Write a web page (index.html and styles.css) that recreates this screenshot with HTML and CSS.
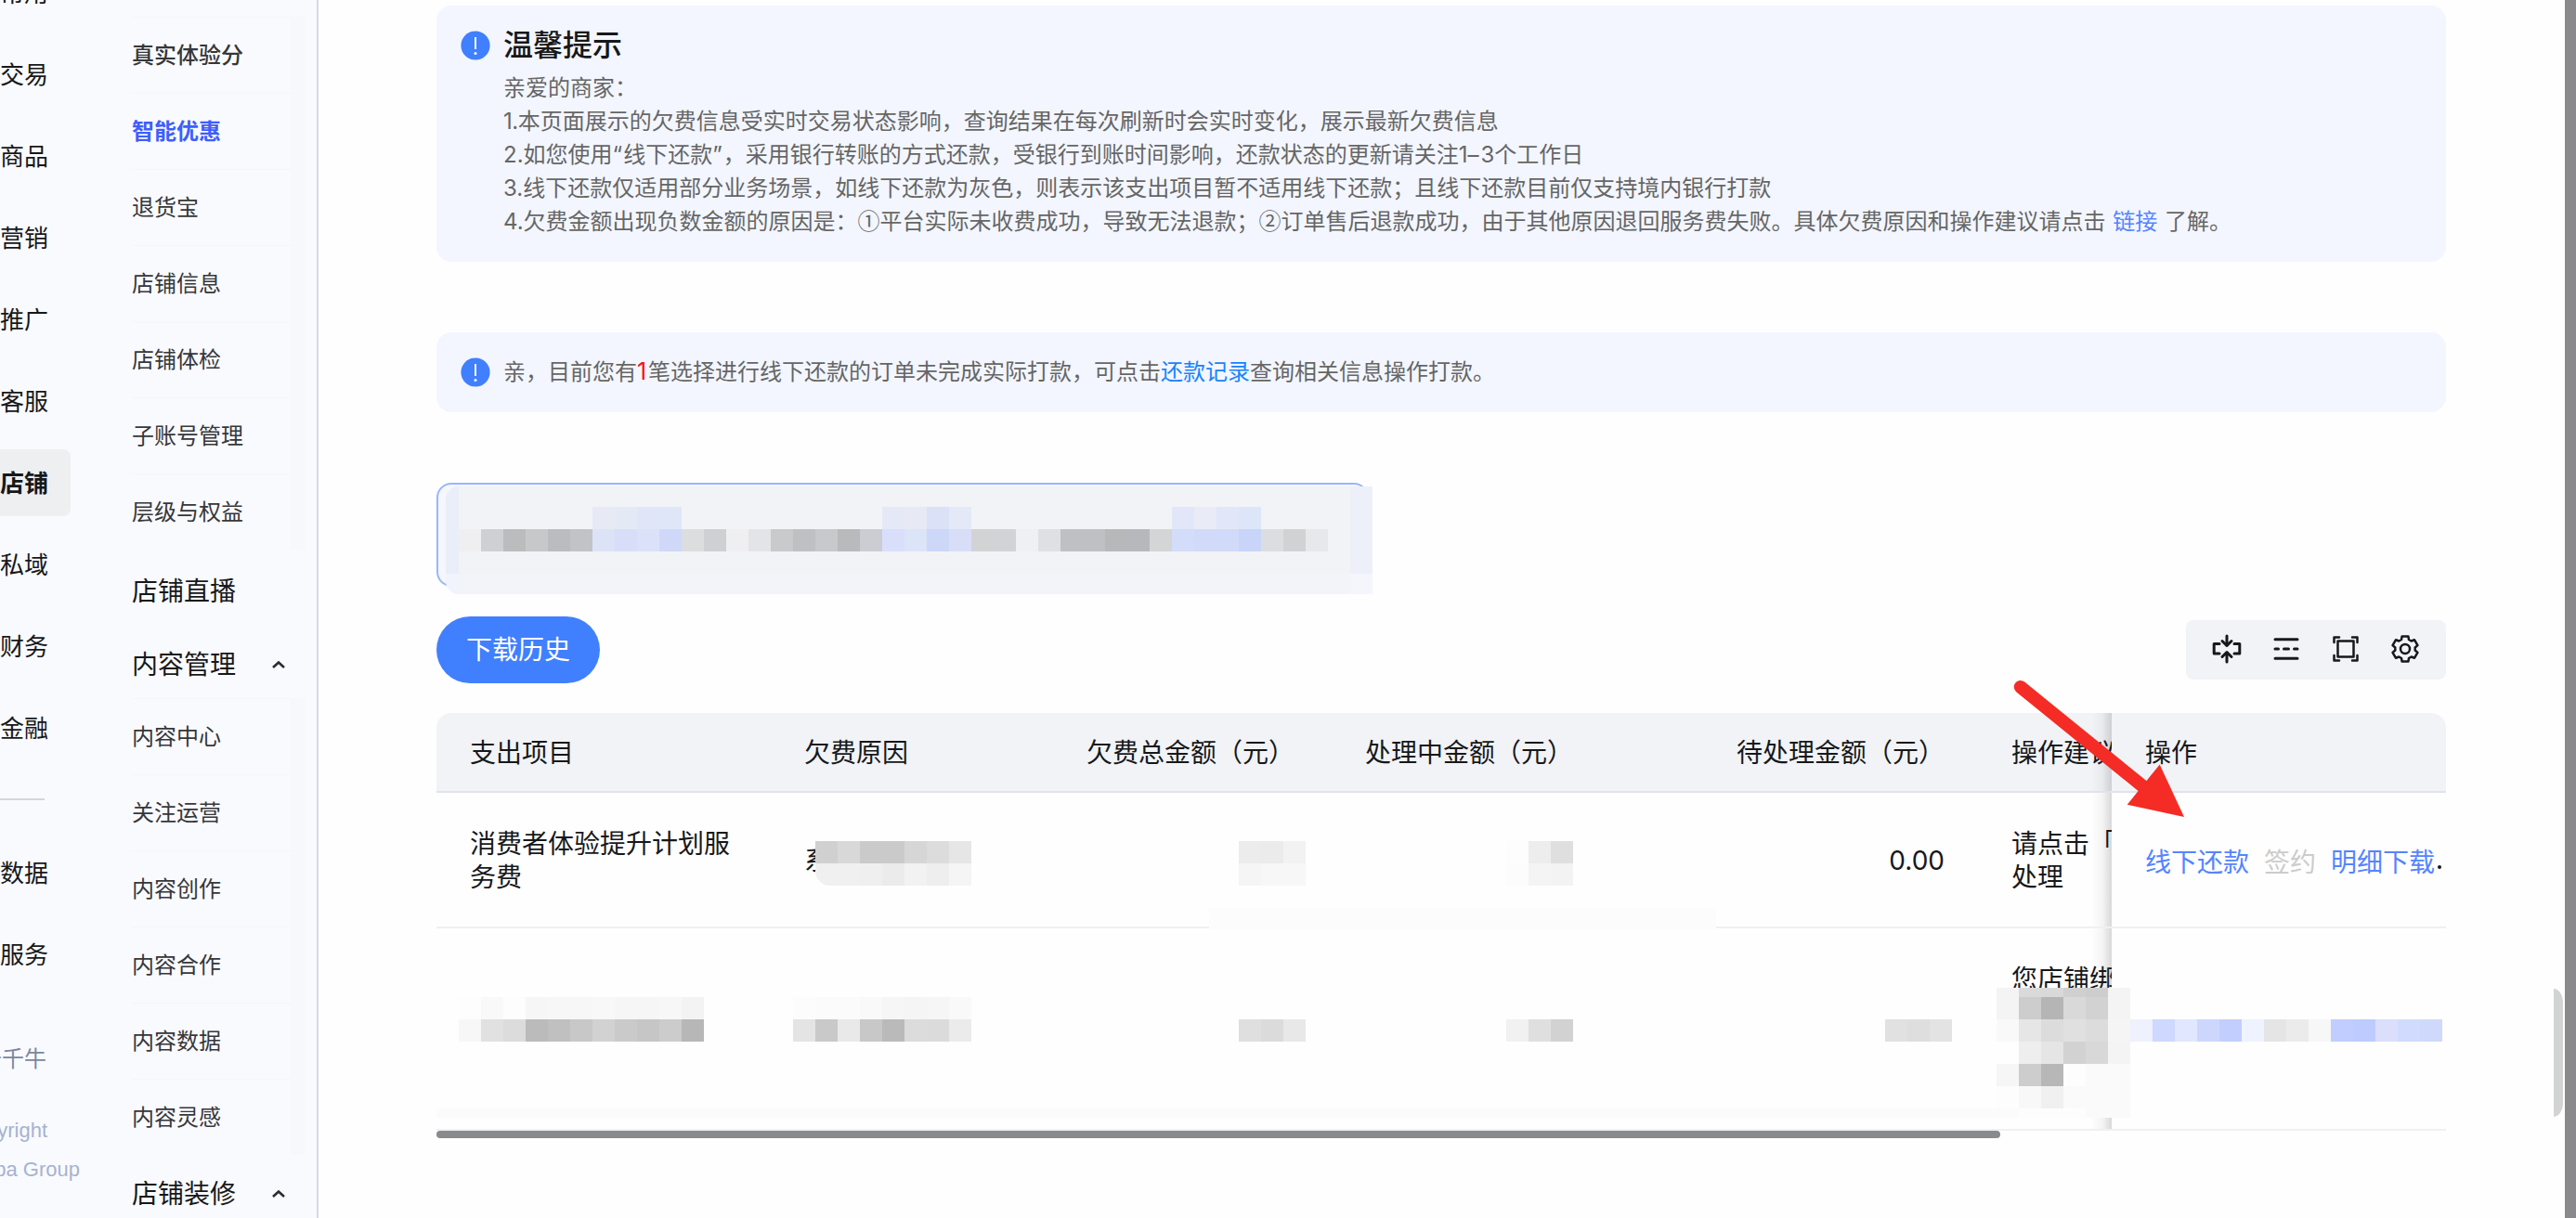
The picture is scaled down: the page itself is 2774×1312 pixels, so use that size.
FILE: index.html
```html
<!DOCTYPE html>
<html lang="zh-CN">
<head>
<meta charset="utf-8">
<title>欠费管理</title>
<link rel="stylesheet" href="styles.css">
</head>
<body>
<div class="app">
  <nav class="rail">
    <div class="rail-item">常用</div>
    <div class="rail-item">交易</div>
    <div class="rail-item">商品</div>
    <div class="rail-item">营销</div>
    <div class="rail-item">推广</div>
    <div class="rail-item">客服</div>
    <div class="rail-item active">店铺</div>
    <div class="rail-item">私域</div>
    <div class="rail-item">财务</div>
    <div class="rail-item">金融</div>
    <div class="rail-rule"></div>
    <div class="rail-item">数据</div>
    <div class="rail-item">服务</div>
    <div class="rail-foot">
      <div class="brand">关于千牛</div>
      <div class="legal">Copyright</div>
      <div class="legal group">Alibaba Group</div>
    </div>
  </nav>
  <aside class="menu">
    <ul class="sub">
      <li class="strong">真实体验分</li>
      <li class="current">智能优惠</li>
      <li>退货宝</li>
      <li>店铺信息</li>
      <li>店铺体检</li>
      <li>子账号管理</li>
      <li>层级与权益</li>
    </ul>
    <div class="head first">店铺直播</div>
    <div class="head">内容管理<svg class="chev" viewBox="0 0 16 10"><path d="M2 8 8 2.5 14 8"/></svg></div>
    <ul class="sub">
      <li>内容中心</li>
      <li>关注运营</li>
      <li>内容创作</li>
      <li>内容合作</li>
      <li>内容数据</li>
      <li>内容灵感</li>
    </ul>
    <div class="head">店铺装修<svg class="chev" viewBox="0 0 16 10"><path d="M2 8 8 2.5 14 8"/></svg></div>
  </aside>
  <main class="main">
    <section class="notice tips">
      <svg class="info" viewBox="0 0 32 32"><circle cx="16" cy="16" r="15.6"/><path d="M16 7v13"/><circle class="dot" cx="16" cy="24.6" r="1.5"/></svg>
      <div>
        <h1>温馨提示</h1>
        <p>亲爱的商家：</p>
        <p><span class="one">1.</span>本页面展示的欠费信息受实时交易状态影响，查询结果在每次刷新时会实时变化，展示最新欠费信息</p>
        <p>2.如您使用<span class="quote">“</span>线下还款<span class="quote">”</span>，采用银行转账的方式还款，受银行到账时间影响，还款状态的更新请关注1<span class="dash">–</span>3个工作日</p>
        <p>3.线下还款仅适用部分业务场景，如线下还款为灰色，则表示该支出项目暂不适用线下还款；且线下还款目前仅支持境内银行打款</p>
        <p>4.欠费金额出现负数金额的原因是：<span class="cjk">①</span>平台实际未收费成功，导致无法退款；<span class="cjk">②</span>订单售后退款成功，由于其他原因退回服务费失败。具体欠费原因和操作建议请点击 <a class="gap">链接</a> 了解。</p>
      </div>
    </section>
    <section class="notice pending">
      <svg class="info" viewBox="0 0 32 32"><circle cx="16" cy="16" r="15.6"/><path d="M16 7v13"/><circle class="dot" cx="16" cy="24.6" r="1.5"/></svg>
      <p>亲，目前您有<b>1</b>笔选择进行线下还款的订单未完成实际打款，可点击<a class="bright">还款记录</a>查询相关信息操作打款。</p>
    </section>
    <section class="tabs">
      <div class="tabs-frame"></div>
      <svg class="tabs-mask" width="998" height="116" shape-rendering="crispEdges">
        <rect width="14" height="94" fill="#eaeef8"/><rect x="14" width="960" height="94" fill="#f1f3f7"/><rect x="974" width="24" height="94" fill="#edf0f9"/>
        <rect y="94" width="14" height="22" fill="#f1f4fc"/><rect x="14" y="94" width="960" height="22" fill="#f2f4f9"/><rect x="974" y="94" width="24" height="22" fill="#f4f6fc"/>
        <g id="tabCells" transform="translate(14 22)"></g>
      </svg>
    </section>
    <div class="bar">
      <button class="history">下载历史</button>
      <div class="tools">
        <svg viewBox="0 0 32 32"><path d="M8 10.500H2.200v10.500H8M24 10.500h5.800v10.500H24"/><path d="M16 2v9M16 30V21M11 7.500l5 5 5-5M11 24.500l5-5 5 5"/></svg>
        <svg viewBox="0 0 32 32"><path d="M4 5.800h24M4 26.200h24M4 16h3.500M13.500 16h5M24.500 16H28"/></svg>
        <svg class="frame" viewBox="0 0 32 32"><path d="M7.500 7.500h17v17h-17z"/><path d="M3.500 9V3.500H9M23 3.500h5.500V9M28.500 23v5.500H23M9 28.500H3.500V23"/></svg>
        <svg class="gear" viewBox="0 0 32 32"><path d="M12 6 12.600 2.400H19.400L20 6 22.650 7.500 26.070 6.270 29.460 12.140 26.700 14.500V17.500L29.460 19.860 26.070 25.730 22.650 24.500 20 26 19.400 29.600H12.600L12 26 9.350 24.500 5.930 25.730 2.540 19.860 5.300 17.500V14.500L2.540 12.140 5.930 6.270 9.350 7.500Z"/><circle cx="16" cy="16" r="5"/></svg>
      </div>
    </div>
    <section class="table">
      <div class="row thead">
        <div>支出项目</div><div>欠费原因</div><div class="num">欠费总金额（元）</div><div class="num">处理中金额（元）</div><div class="num">待处理金额（元）</div><div class="advice">操作建议</div><div class="fixed">操作</div>
      </div>
      <div class="row r1">
        <div>消费者体验提升计划服务费</div><div>系</div><div></div><div></div><div class="num">0.00</div><div class="advice">请点击「<br>处理</div>
        <div class="fixed links"><a>线下还款</a><a class="off">签约</a><a>明细下载</a><i></i></div>
      </div>
      <div class="row r2">
        <div></div><div></div><div></div><div></div><div></div><div class="advice">您店铺绑</div><div class="fixed"></div>
      </div>
      <svg class="cells" id="cells" width="2164" height="448" shape-rendering="crispEdges"></svg>
      <div class="hscroll"></div>
    </section>
  </main>
  <div class="gutter"></div>
  <svg class="arrow" viewBox="0 0 200 160"><path d="M15.800 20 150 129" /><polygon points="192,160 165.700,103.500 130.700,146.800"/></svg>
</div>
<script src="mask.js"></script>
</body>
</html>
```
FILE: styles.css
```css
* { box-sizing: border-box; margin: 0; padding: 0; }
body {
  width: 2774px; height: 1312px; overflow: hidden; background: #fefefe; color: #17181a;
  font-family: Inter, "Noto Sans CJK SC", sans-serif; font-size: 28px; line-height: 36px;
}
.app { position: relative; display: flex; width: 2774px; height: 1312px; overflow: hidden; }

.rail { width: 102px; background: #f9fafd; font-size: 26px; margin-top: -52px; height: 1364px; flex: none; }
.rail-item { display: flex; width: 76px; height: 72px; margin-bottom: 16px; align-items: center; justify-content: flex-end; padding: 2px 24px 0 0; white-space: nowrap; border-radius: 0 8px 8px 0; }
.rail-item:first-child { margin-top: 8px; }
.rail-item.active { background: #eeeff1; font-weight: 600; }
.rail-rule { width: 48px; height: 2px; background: #d5d6da; margin: 40px 0 42px; }
.rail-foot { color: #7c86a0; font-size: 24px; padding-top: 43px; }
.brand { width: 50px; display: flex; justify-content: flex-end; white-space: nowrap; }
.legal { font: 22px/43px "Liberation Sans", sans-serif; color: #a5b3d1; display: flex; justify-content: flex-end; width: 51px; white-space: nowrap; margin-top: 37px; }
.legal.group { width: 86px; margin-top: -1px; }

.menu { width: 241px; flex: none; background: #f9fafd; border-right: 2px solid #d5d9e8; padding: 18px 12px 0 40px; }
.sub { list-style: none; font-size: 24px; color: #36373a; border-right: 16px solid #f7f8fb; }
.sub li { height: 82px; display: flex; align-items: center; border-top: 1px solid #f5f6f9; }
.sub .strong { font-weight: 500; }
.sub .current { font-weight: 700; color: #3d5eff; }
.head { height: 78px; display: flex; align-items: center; padding: 5px 21px 0 0; font-size: 28px; justify-content: space-between; }
.head.first { height: 84px; margin-bottom: -2px; }
.chev { width: 16px; height: 10px; fill: none; stroke: #2b2c2f; stroke-width: 2.6; }

.main { width: 2419px; flex: none; padding: 6px 0 0 127px; display: flex; flex-direction: column; }
.main > * { width: 2164px; flex: none; }
.notice { background: #f3f6ff; border-radius: 16px; display: flex; padding-left: 26px; gap: 14px; color: #666; font-size: 24px; line-height: 36px; white-space: nowrap; }
.notice p { height: 36px; }
.notice a, .links a { color: #5584ff; }
.notice a.bright { color: #1684fc; }
.notice a.gap { margin: 0 1px; }
.notice b { display: inline-block; width: 12px; color: #fb1016; font-weight: 400; font-size: 25px; line-height: 30px; }
.notice h1 { font-size: 32px; line-height: 40px; font-weight: 500; color: #17181a; margin-bottom: 8px; }
.one { letter-spacing: -.5px; }
.quote { letter-spacing: 1px; }
.dash { letter-spacing: 2px; }
.cjk { font-family: "Noto Sans CJK SC", sans-serif; line-height: 30px; }
.tips { height: 276px; padding-top: 24px; }
.info { width: 32px; height: 32px; flex: none; fill: #4080ff; }
.info path { stroke: #fff; stroke-width: 2; }
.info .dot { fill: #fff; }
.tips .info { margin-top: 3px; }
.tips h1 { margin-top: -1px; }
.pending { height: 86px; margin-top: 76px; align-items: center; }

.tabs { height: 120px; margin-top: 76px; position: relative; }
.tabs-frame { width: 1004px; height: 112px; border: 2px solid #97b7ff; border-radius: 16px; background: #f5f7fc; }
.tabs-mask { position: absolute; left: 10px; top: 4px; border-radius: 14px 0 0 14px; }

.bar { margin-top: 24px; height: 72px; display: flex; align-items: center; justify-content: space-between; }
.history { width: 176px; height: 72px; border: 0; border-radius: 36px; background: #4080ff; color: #fff; font: inherit; }
.tools { width: 280px; height: 64px; border-radius: 8px; background: #f1f3f7; display: flex; align-items: center; justify-content: center; gap: 32px; padding-bottom: 2px; }
.tools svg { width: 32px; height: 32px; fill: none; stroke: #17181a; stroke-width: 3; stroke-linejoin: round; stroke-linecap: round; }
.tools .frame, .tools .gear { stroke-width: 2.5; }

.table { margin-top: 32px; position: relative; }
.row { display: grid; grid-template-columns: 360px 300px 300px 300px 400px 144px 360px; border-bottom: 2px solid #eff0f4; }
.row > div { display: flex; align-items: center; padding: 0 36px; }
.row > .num { justify-content: flex-end; white-space: nowrap; }
.row > .advice { padding-right: 0; white-space: nowrap; overflow: hidden; background: linear-gradient(90deg, rgba(0,0,0,0) 122px, rgba(0,0,0,.04) 134px, rgba(0,0,0,.15) 144px); }
.thead { height: 86px; background: #f1f3f7; border-color: #e2e3ea; border-radius: 16px 16px 0 0; }
.thead > div { padding-top: 1px !important; }
.r1 { height: 146px; }
.r1 > div { padding-top: 1px; }
.r2 { height: 218px; }
.row.r2 > .advice { align-items: flex-start; padding-top: 37px; }
.row > .links { gap: 16px; padding: 6px 0 0 36px; white-space: nowrap; }
.links .off { color: #ccc; }
.links i { width: 4px; height: 4px; border-radius: 2px; background: #17181a; margin: 10px 0 0 -13px; }
.cells { position: absolute; left: 0; top: 0; }
.hscroll { width: 1684px; height: 8px; border-radius: 4px; background: #898a8c; }

.gutter { width: 12px; background: #8a8a8d; }
.gutter::before { content: ""; position: absolute; left: 2750px; top: 1065px; width: 10px; height: 138px; border-radius: 0 10px 10px 0 / 0 15px 15px 0; background: #d2d4d3; }
.arrow { position: absolute; left: 2160px; top: 720px; width: 200px; height: 160px; fill: #f42c25; }
.arrow path { stroke: #f42c25; stroke-width: 14; stroke-linecap: round; }
```
FILE: mask.js
```js
// Redaction mosaics: each strip is a run of 24px blocks.
const NS = "http://www.w3.org/2000/svg";
function box(parent, x, y, w, h, fill) {
  const r = document.createElementNS(NS, "rect");
  for (const [k, v] of Object.entries({ x, y, width: w, height: h, fill })) r.setAttribute(k, v);
  parent.appendChild(r);
}
function strip(parent, x, y, colors, h = 24) {
  colors.split(" ").forEach((c, i) => box(parent, x + i * 24, y, 24, h, "#" + c));
}
const tabs = document.getElementById("tabCells");
strip(tabs, 144, 0, "e7eaf5 e4eaf5 e0e6f7 dfe6f8");
strip(tabs, 456, 0, "e5e9f7 e7eaf5 dbe1f7 e3e9f7");
strip(tabs, 768, 0, "e1e7f8 e9ecf6 e1e7f8 dde5f9");
strip(tabs, 0, 24, "efeff1 cfd0d3 bbbcbd c7c8c9 bbbcc0 c1c3c7 dce3f7 d9def8 dbe1f9 cfd8f9 dcdddf cfd0d4 efeff1 e3e4e7 c9cacc bfc0c4 c8c9cd b9babc cccdd2 d9defa dce4f8 cdd7f8 d9def8 d2d3d5 d2d3d6 eff0f3 dfe0e4 bfc0c4 bfc0c4 b7b8ba b7b8bc d4d5d7 d3dcf8 d1daf9 d1daf9 c9d5f8 dcdde1 d1d2d4 e7e8ec");

const t = document.getElementById("cells");
strip(t, 408, 138, "d0d0d0 d8d8d8 cacaca cacaca d6d6d6 dcdcdc e6e6e6");
strip(t, 432, 162, "f0f0f0 efefef ebebeb f2f2f2 eeeeee f5f5f5");
// the block at the start of this row has a rounded lower corner
const corner = document.createElementNS(NS, "path");
corner.setAttribute("d", "M408 162h24v24h-8a16 16 0 0 1-16-16z");
corner.setAttribute("fill", "#f0f0f0");
t.appendChild(corner);
strip(t, 864, 138, "ececec ebebeb f2f2f2");
strip(t, 864, 162, "f5f5f5 f7f7f7 f7f7f7");
strip(t, 1152, 138, "fdfdfd ededed dfdfdf");
strip(t, 1152, 162, "fcfcfc f4f4f4 f3f3f3");
box(t, 832, 210, 546, 24, "#fcfcfc");
strip(t, 24, 306, "fdfdfd f9f9f9 fdfdfd f6f6f6 f7f7f7 f7f7f7 f8f8f8 f6f6f6 f6f6f6 f7f7f7 f3f3f3");
strip(t, 24, 330, "f7f7f7 e1e1e1 dcdcdc bbbbbb c0c0c0 c8c8c8 d2d2d2 cacaca c6c6c6 cccccc b7b7b7");
strip(t, 384, 306, "fcfcfc fbfbfb fbfbfb f9f9f9 f6f6f6 f5f5f5 f6f6f6 f9f9f9");
strip(t, 384, 330, "e4e4e4 c9c9c9 e9e9e9 c8c8c8 bababa dcdcdc dbdbdb ebebeb");
strip(t, 864, 330, "dfdfdf dbdbdb e8e8e8");
strip(t, 1152, 330, "f1f1f1 dfdfdf d2d2d2");
strip(t, 1560, 330, "e1e1e1 dedede e3e3e3");
box(t, 0, 426, 1680, 10, "#fbfbfb");
strip(t, 1680, 296, "f4f4f4 dadada d9d9d9 d0d0d0 cdcdcd f4f4f4", 10);
strip(t, 1680, 306, "f4f4f4 cdcdcd b5b5b5 d9d9d9 d2d2d2 f4f4f4");
strip(t, 1680, 330, "f9f9f9 e6e6e6 dcdcdc e0e0e0 dcdcdc f5f5f5 eff1fe cfd8ff e1e7ff cdd7fe c2cefe eff2ff e5e5e5 ebebeb f7f7f7 c1cdfe bdcbff dcdffb d1dbfe cfd9fb");
strip(t, 1680, 354, "fefefe eeeeee e5e5e5 d2d2d2 d8d8d8 f4f4f4");
strip(t, 1680, 378, "f6f6f6 cdcdcd b7b7b7 fdfdfd fafafa fafafa");
strip(t, 1680, 402, "fdfdfd f8f8f8 f0f0f0 fafafa fafafa fafafa");
strip(t, 1680, 426, "fbfbfb fdfdfd fdfdfd fdfdfd fafafa fafafa", 10);
```
